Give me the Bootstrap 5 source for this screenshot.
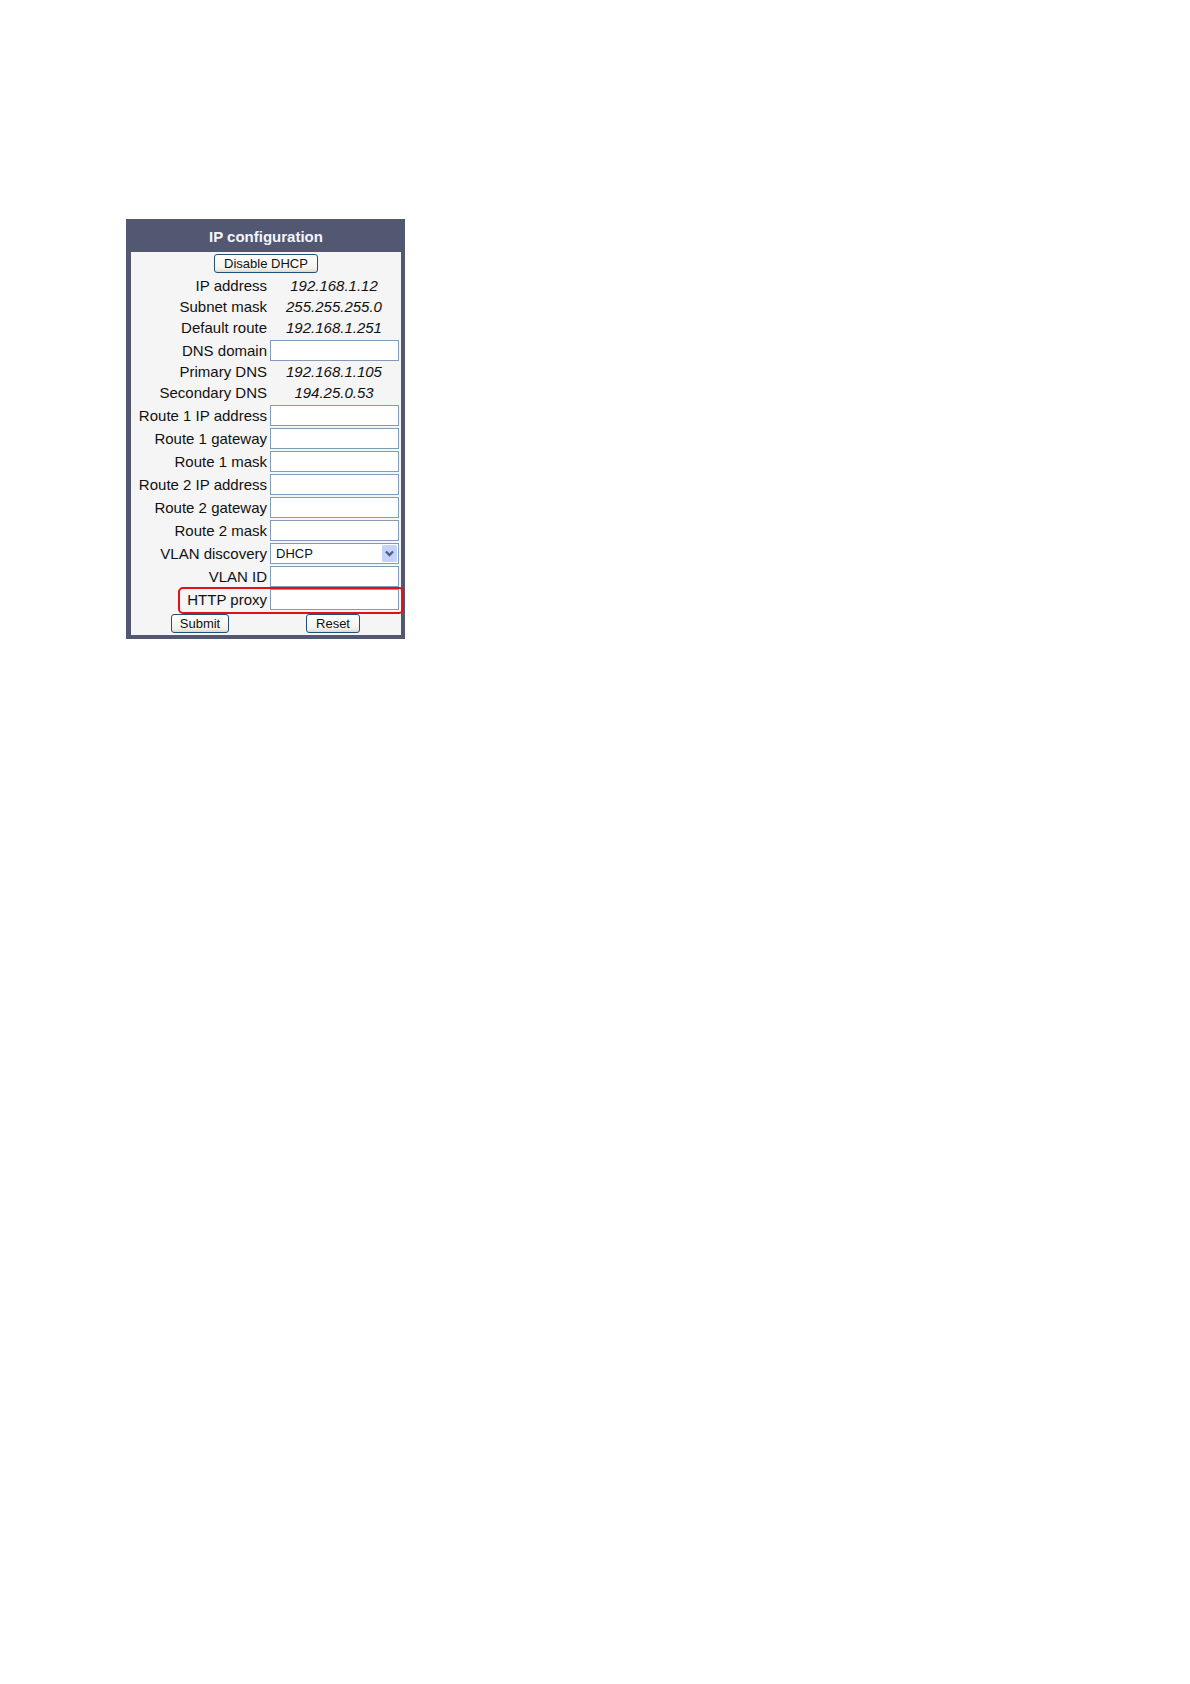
<!DOCTYPE html>
<html lang="en">
<head>
<meta charset="utf-8">
<meta name="viewport" content="width=device-width, initial-scale=1">
<title>IP configuration</title>
<link href="https://cdn.jsdelivr.net/npm/bootstrap@5.3.0/dist/css/bootstrap.min.css" rel="stylesheet">
<style>
body { font-family: "Liberation Sans", Arial, sans-serif; font-size: 15px; line-height: 19px; color: #111; background: #fff; }
.page-area { padding: 219px 16px 16px 126px; }
.ip-panel { max-width: 279px; background: #f5f5f5; border: 4px solid #525872; border-left-width: 5px; border-top: 0; }
.ip-title { margin: 0; font-size: 15px; line-height: 33px; font-weight: 700; color: #f2f4ff; background: #525872; padding-top: 1px; height: 33px; }
.ip-row { display: grid; grid-template-columns: 138px 1fr; align-items: start; min-height: 21px; }
.ip-row.field-row { min-height: 23px; align-items: center; }
.ip-row label, .ip-row .caption-cell { text-align: right; padding-right: 2px; white-space: nowrap; }
.value-cell { text-align: center; font-style: italic; padding-right: 2px; }
.field-cell { position: relative; padding: 0 2px 0 1px; display: flex; }
.field-row .form-control, .field-row .form-select { height: 21px; min-height: 0; padding: 0 5px; font-size: 13px; line-height: 19px; color: #111; border: 1px solid #7f9db9; border-radius: 0; background: #fff; }
.arrow-icon { position: absolute; right: 4px; top: 2px; pointer-events: none; }
.action-row { height: 24px; }
.action-row.ip-row { align-items: center; }
.top-action { padding-bottom: 2px; }
.btn-xp { height: 19px; padding: 0 8px; font-size: 13px; line-height: 17px; color: #111; border: 1px solid #1f5078; border-radius: 3px; background: linear-gradient(#fff, #f3f2ea 80%, #dcd8cb); }
.btn-wide { padding: 0 9px; }
.marked-row { position: relative; }
.marked-row::after { content: ""; position: absolute; z-index: 1; left: 47px; right: -3px; top: -1px; bottom: -3px; border: 2px solid #e01018; border-radius: 5px; pointer-events: none; }
</style>
<script src="https://cdn.jsdelivr.net/npm/bootstrap@5.3.0/dist/js/bootstrap.bundle.min.js"></script>
</head>
<body>
<main class="page-area">
<form class="ip-panel">
  <h1 class="ip-title text-center">IP configuration</h1>
  <div class="action-row top-action d-flex justify-content-center align-items-center"><button type="button" class="btn btn-xp btn-wide">Disable DHCP</button></div>
  <div class="ip-row"><span class="caption-cell">IP address</span><span class="value-cell">192.168.1.12</span></div>
  <div class="ip-row"><span class="caption-cell">Subnet mask</span><span class="value-cell">255.255.255.0</span></div>
  <div class="ip-row"><span class="caption-cell">Default route</span><span class="value-cell">192.168.1.251</span></div>
  <div class="ip-row field-row"><label for="dns">DNS domain</label><div class="field-cell"><input class="form-control" type="text" id="dns"></div></div>
  <div class="ip-row"><span class="caption-cell">Primary DNS</span><span class="value-cell">192.168.1.105</span></div>
  <div class="ip-row"><span class="caption-cell">Secondary DNS</span><span class="value-cell">194.25.0.53</span></div>
  <div class="ip-row field-row"><label for="r1ip">Route 1 IP address</label><div class="field-cell"><input class="form-control" type="text" id="r1ip"></div></div>
  <div class="ip-row field-row"><label for="r1gw">Route 1 gateway</label><div class="field-cell"><input class="form-control" type="text" id="r1gw"></div></div>
  <div class="ip-row field-row"><label for="r1mask">Route 1 mask</label><div class="field-cell"><input class="form-control" type="text" id="r1mask"></div></div>
  <div class="ip-row field-row"><label for="r2ip">Route 2 IP address</label><div class="field-cell"><input class="form-control" type="text" id="r2ip"></div></div>
  <div class="ip-row field-row"><label for="r2gw">Route 2 gateway</label><div class="field-cell"><input class="form-control" type="text" id="r2gw"></div></div>
  <div class="ip-row field-row"><label for="r2mask">Route 2 mask</label><div class="field-cell"><input class="form-control" type="text" id="r2mask"></div></div>
  <div class="ip-row field-row"><label for="vland">VLAN discovery</label><div class="field-cell">
    <select class="form-select" id="vland"><option>DHCP</option></select>
    <svg class="arrow-icon" width="15" height="17" viewBox="0 0 15 17" aria-hidden="true"><rect width="15" height="17" rx="1.5" fill="#c3d3fb"/><path d="M4 6.5 7.5 10 11 6.5" fill="none" stroke="#4d6185" stroke-width="2.4"/></svg>
  </div></div>
  <div class="ip-row field-row"><label for="vlanid">VLAN ID</label><div class="field-cell"><input class="form-control" type="text" id="vlanid"></div></div>
  <div class="ip-row field-row marked-row"><label for="proxy">HTTP proxy</label><div class="field-cell"><input class="form-control" type="text" id="proxy"></div></div>
  <div class="ip-row action-row">
    <div class="d-flex justify-content-center"><button type="submit" class="btn btn-xp">Submit</button></div>
    <div class="d-flex justify-content-center pe-1"><button type="reset" class="btn btn-xp btn-wide">Reset</button></div>
  </div>
</form>
</main>
</body>
</html>
